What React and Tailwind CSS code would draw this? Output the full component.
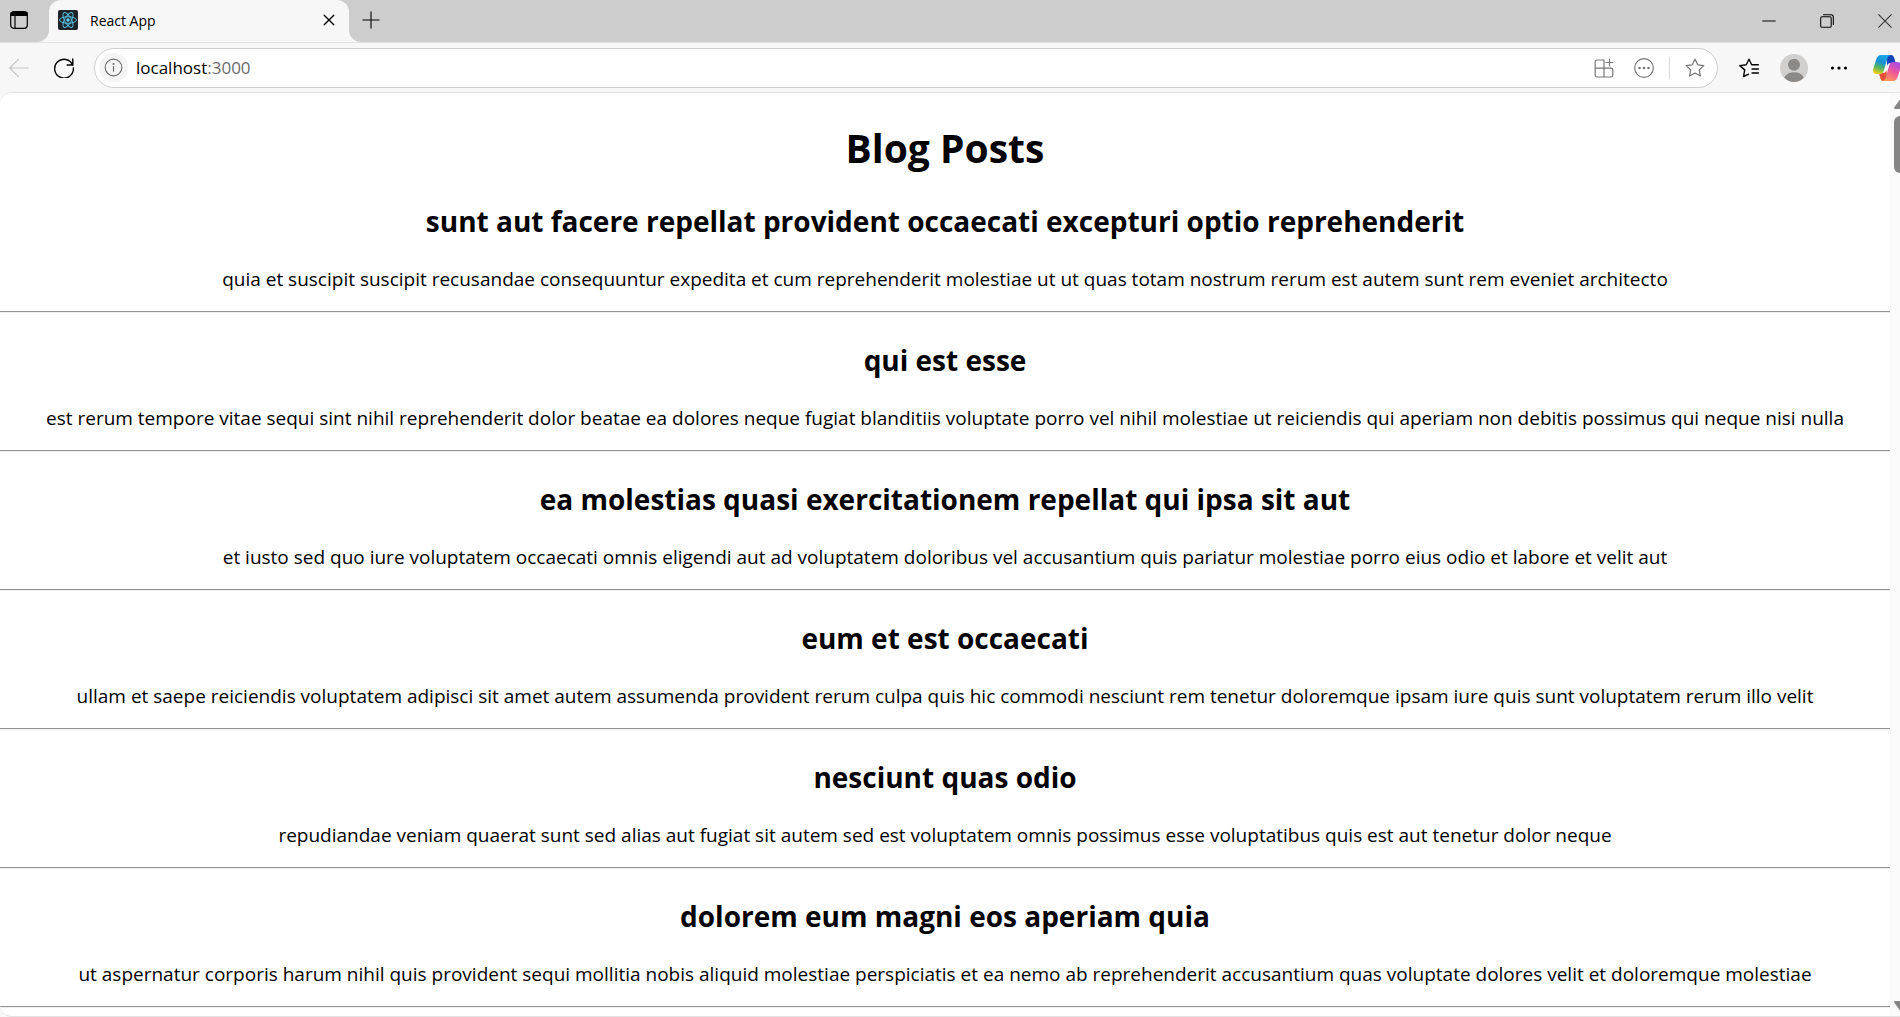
import React from "react";

const posts = [
  ["sunt aut facere repellat provident occaecati excepturi optio reprehenderit", "quia et suscipit suscipit recusandae consequuntur expedita et cum reprehenderit molestiae ut ut quas totam nostrum rerum est autem sunt rem eveniet architecto"],
  ["qui est esse", "est rerum tempore vitae sequi sint nihil reprehenderit dolor beatae ea dolores neque fugiat blanditiis voluptate porro vel nihil molestiae ut reiciendis qui aperiam non debitis possimus qui neque nisi nulla"],
  ["ea molestias quasi exercitationem repellat qui ipsa sit aut", "et iusto sed quo iure voluptatem occaecati omnis eligendi aut ad voluptatem doloribus vel accusantium quis pariatur molestiae porro eius odio et labore et velit aut"],
  ["eum et est occaecati", "ullam et saepe reiciendis voluptatem adipisci sit amet autem assumenda provident rerum culpa quis hic commodi nesciunt rem tenetur doloremque ipsam iure quis sunt voluptatem rerum illo velit"],
  ["nesciunt quas odio", "repudiandae veniam quaerat sunt sed alias aut fugiat sit autem sed est voluptatem omnis possimus esse voluptatibus quis est aut tenetur dolor neque"],
  ["dolorem eum magni eos aperiam quia", "ut aspernatur corporis harum nihil quis provident sequi mollitia nobis aliquid molestiae perspiciatis et ea nemo ab reprehenderit accusantium quas voluptate dolores velit et doloremque molestiae"],
];

function Icon({ size = 20, className = "", width = 1.2, children }) {
  return (
    <svg width={size} height={size} viewBox="0 0 20 20" fill="none" stroke="currentColor" strokeWidth={width} strokeLinecap="round" strokeLinejoin="round" className={`shrink-0 ${className}`} aria-hidden="true">
      {children}
    </svg>
  );
}

function IconButton({ label, className = "", children, ...rest }) {
  return (
    <button type="button" aria-label={label} className={`flex shrink-0 items-center justify-center ${className}`} {...rest}>
      {children}
    </button>
  );
}

function TabStrip() {
  return (
    <header className="flex h-[42px] shrink-0 bg-[#cdcdcd] text-black">
      <div className="flex w-[49px] shrink-0 bg-[#f7f7f7]">
        <IconButton label="Tab actions" className="w-full rounded-br-xl bg-[#cdcdcd] pr-3 pb-[2px]">
          <Icon>
            <rect x="1.7" y="1.7" width="16.6" height="16.6" rx="3" />
            <path d="M6 6v12" />
            <path d="M2 2.5h16v3H2z" fill="currentColor" />
          </Icon>
        </IconButton>
      </div>
      <div role="tab" aria-selected="true" className="flex w-[300px] shrink-0 items-center rounded-t-xl bg-[#f7f7f7] pr-2 pb-[2px] pl-[9px]">
        <svg width="20" height="20" viewBox="0 0 20 20" className="shrink-0" aria-hidden="true">
          <rect width="20" height="20" rx="2" fill="#20232a" />
          <g fill="none" stroke="#53bfdb" strokeWidth="1">
            <ellipse cx="10" cy="10" rx="8.4" ry="3.3" />
            <ellipse cx="10" cy="10" rx="8.4" ry="3.3" transform="rotate(60 10 10)" />
            <ellipse cx="10" cy="10" rx="8.4" ry="3.3" transform="rotate(120 10 10)" />
          </g>
          <circle cx="10" cy="10" r="1.7" fill="#61dafb" />
        </svg>
        <span className="ml-3 flex-1 text-[14px]">React App</span>
        <IconButton label="Close tab" className="size-6">
          <Icon size={12} width={2.2}><path d="M2 2l16 16M18 2L2 18" /></Icon>
        </IconButton>
      </div>
      <div className="flex flex-1 bg-[#f7f7f7]">
        <div className="flex flex-1 items-center justify-between rounded-bl-xl bg-[#cdcdcd]">
          <IconButton label="New tab" className="ml-[2px] size-10 pb-[2px]"><Icon size={18}><path d="M10 1v18M1 10h18" /></Icon></IconButton>
          <div className="flex items-center">
            <IconButton label="Minimize" className="h-10 w-[58px]"><Icon size={14} width={1.4}><path d="M1 10h18" /></Icon></IconButton>
            <IconButton label="Restore" className="h-10 w-[58px]">
              <Icon size={14} width={1.5}><rect x="1" y="4" width="15" height="15" rx="2" /><path d="M5 1h11a3 3 0 0 1 3 3v11" /></Icon>
            </IconButton>
            <IconButton label="Close window" className="h-10 w-[58px] -mr-[14px] text-[#333]"><Icon size={14} width={1.5}><path d="M1 1l18 18M19 1L1 19" /></Icon></IconButton>
          </div>
        </div>
      </div>
    </header>
  );
}

const star = "M10 1.2l2.7 5.6 6.1.8-4.5 4.3 1.1 6.2L10 15.1l-5.4 3 1.1-6.2L1.2 7.6l6.1-.8z";

function Toolbar() {
  return (
    <nav className="flex h-[50px] shrink-0 items-center border-t border-[#e3e3e3] bg-[#f7f7f7] text-black">
      <IconButton label="Back" disabled className="w-[38px] text-[#c8c8c8]"><Icon><path d="M19.3 10H1M9.3 1.5L.8 10l8.5 8.5" /></Icon></IconButton>
      <IconButton label="Refresh" className="w-[52px]">
        <Icon width={1.4}><path d="M18.8 7.3A9.4 9.4 0 1 0 19.4 10M18.8 1v6h-5.6" /></Icon>
      </IconButton>
      <div className="ml-1 flex h-10 flex-1 items-center rounded-full border border-[#cfcfcf] bg-white pr-[2px] pl-1">
        <IconButton label="View site information" className="size-[29px] rounded-full bg-[#f4f4f4] text-[#6e6e6e]">
          <Icon size={19}><circle cx="10" cy="10" r="8.8" /><path d="M10 9v5" /><circle cx="10" cy="6.3" r=".5" fill="currentColor" /></Icon>
        </IconButton>
        <a href="http://localhost:3000" className="ml-2 flex-1 text-[17px]">localhost<span className="text-[#6b6b6b]">:3000</span></a>
        <div className="flex items-center text-[#767676]">
          <IconButton label="Apps" className="w-10">
            <Icon><path d="M10 2H3a1.800 1.800 0 0 0-1.800 1.800v13.400A1.800 1.800 0 0 0 3 19h14a1.800 1.800 0 0 0 1.800-1.800V12a1.800 1.800 0 0 0-1.800-1.800H1.200M10 2v17M15.500 1v7M12 4.500h7" /></Icon>
          </IconButton>
          <IconButton label="Page options" className="w-10">
            <Icon><circle cx="10" cy="10" r="9.300" /><g fill="currentColor" stroke="none"><circle cx="5.500" cy="10" r="1.300" /><circle cx="10" cy="10" r="1.300" /><circle cx="14.500" cy="10" r="1.300" /></g></Icon>
          </IconButton>
          <span className="mx-[5px] h-[22px] w-px bg-[#d4d4d4]" />
          <IconButton label="Add to favorites" className="w-10"><Icon><path d={star} /></Icon></IconButton>
        </div>
      </div>
      <div className="-mr-px ml-2 flex shrink-0 items-center">
        <IconButton label="Favorites" className="w-[45px]">
          <Icon width={1.4}><path d="M9.600 16.200l-5 2.300 1.100-6.600L.8 7.600l6.500-.8L10 1.200l2.700 5.600h6.600M13 11h6.500M13 15h6.500" /></Icon>
        </IconButton>
        <IconButton label="Profile" className="w-[45px]">
          <svg width="28" height="28" viewBox="0 0 28 28" aria-hidden="true">
            <circle cx="14" cy="14" r="14" fill="#d2d0ce" />
            <g fill="#8d8986"><circle cx="14" cy="10.700" r="6" /><path d="M4.200 23.500C6 20 9.500 18.300 14 18.300s8 1.700 9.800 5.200A14 14 0 0 1 14 28a14 14 0 0 1-9.800-4.500z" /></g>
          </svg>
        </IconButton>
        <IconButton label="Settings and more" className="w-[45px]">
          <Icon><g fill="currentColor" stroke="none"><circle cx="3.500" cy="10" r="1.600" /><circle cx="10" cy="10" r="1.600" /><circle cx="16.500" cy="10" r="1.600" /></g></Icon>
        </IconButton>
        <IconButton label="Copilot" className="ml-3 w-7">
          <svg width="28" height="28" viewBox="0 0 28 28" aria-hidden="true">
            <defs>
              <linearGradient id="cool" x1="0.6" y1="0" x2="0.3" y2="1"><stop offset="0" stopColor="#1ba6ee" /><stop offset=".4" stopColor="#1c91cf" /><stop offset=".7" stopColor="#58b95b" /><stop offset="1" stopColor="#f4cb16" /></linearGradient>
              <linearGradient id="warm" x1="0.8" y1="0" x2="0.3" y2="1"><stop offset="0" stopColor="#a34be8" /><stop offset=".5" stopColor="#f0569b" /><stop offset="1" stopColor="#ff9a55" /></linearGradient>
            </defs>
            <path d="M14 1h4c2 0 3 2 3.600 4l1 4h-5c-2 0-3 1-3.600 3z" fill="#1644b8" />
            <path d="M14 27h-4c-2 0-2.400-2-3-4l-1-4h4c2 0 3-1 3.600-3z" fill="#e8503a" />
            <path d="M8 1h10c-2 0-3 1.500-3.500 3L11 16c-.7 2.500-2 4-4 4H4c-3 0-4.500-2-3.800-5L3 6c1-3.500 2.500-5 5-5z" fill="url(#cool)" />
            <path d="M20 27H9c2 0 3-1.500 3.500-3L16 12c.7-2.500 2-4 4-4h4c3 0 4.500 2 3.800 5L25 22c-1 3.500-2.500 5-5 5z" fill="url(#warm)" />
          </svg>
        </IconButton>
      </div>
    </nav>
  );
}

function Scrollbar() {
  return (
    <div aria-hidden="true" className="flex w-[10px] shrink-0 flex-col items-start overflow-hidden bg-[#fafafa] pt-[6px] pb-[5px] pl-1 text-[#858585]">
      <svg width="14" height="10" viewBox="0 0 14 10" className="shrink-0"><path d="M5.500 1.200Q7-.8 8.500 1.200L13.500 8q1 2-1 2h-11Q-.5 10 .5 8z" fill="currentColor" /></svg>
      <div className="mt-[7px] h-[57px] w-3 shrink-0 rounded-md bg-[#858585]" />
      <div className="flex-1" />
      <svg width="14" height="10" viewBox="0 0 14 10" className="shrink-0"><path d="M5.500 8.800Q7 10.800 8.500 8.800L13.500 2q1-2-1-2h-11Q-.5 0 .5 2z" fill="currentColor" /></svg>
    </div>
  );
}

export default function App() {
  return (
    <div className="flex min-h-screen flex-col overflow-hidden bg-[#f7f7f7] font-['Open_Sans','Noto_Sans',sans-serif]">
      <TabStrip />
      <Toolbar />
      <div className="flex flex-1 overflow-hidden rounded-l-xl border-t border-b border-[#e3e3e3] bg-white">
        <main className="min-w-0 flex-1 pt-7 text-center text-black">
          <h1 className="text-[39px] leading-[54px] font-bold">Blog Posts</h1>
          {posts.map(([title, body]) => (
            <article key={title} className="pt-[26px]">
              <h2 className="text-[28px] leading-10 font-bold">{title}</h2>
              <p className="mt-[25px] mb-[18px] text-[19px] leading-[27px]">{body}</p>
              <hr className="mb-px h-[2px] border-t border-b border-t-[#949494] border-b-[#eeeeee]" />
            </article>
          ))}
        </main>
        <Scrollbar />
      </div>
    </div>
  );
}
